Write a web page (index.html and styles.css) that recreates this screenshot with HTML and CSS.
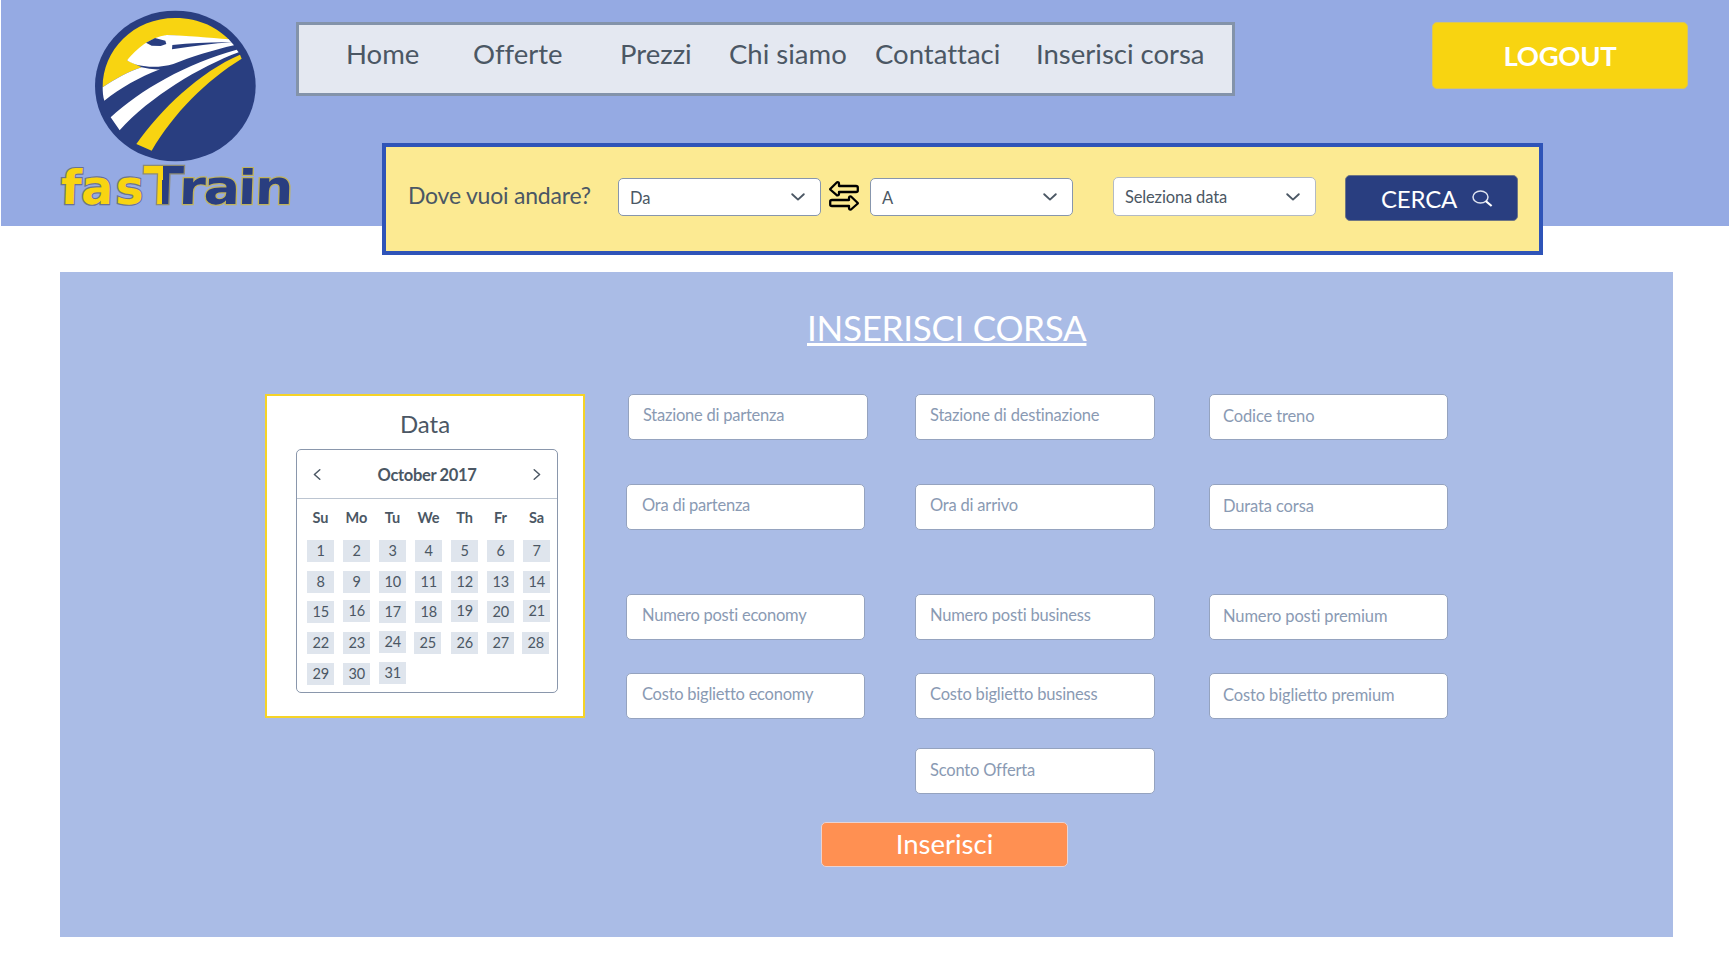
FILE: index.html
```html
<!DOCTYPE html>
<html lang="it">
<head>
<meta charset="utf-8">
<title>fasTrain - Inserisci corsa</title>
<link rel="stylesheet" href="styles.css">
</head>
<body>
<header class="header">
  <svg class="logo" viewBox="174 30 708 594" aria-label="fasTrain">
    <defs>
      <linearGradient id="split" gradientUnits="userSpaceOnUse" x1="0" y1="0" x2="960" y2="0">
        <stop offset="0.447" stop-color="#f8d411"/><stop offset="0.447" stop-color="#293e80"/>
      </linearGradient>
    </defs>
    <ellipse cx="526" cy="258" rx="241" ry="226" fill="#293e80"/>
    <path fill="#f8d411" d="M308 262C308 150 400 54 526 54C600 54 655 85 688 120L500 105L381 181L425 202C385 215 345 238 308 262Z"/>
    <path fill="#fff" d="M381 181C410 145 450 112 500 105C560 107 630 113 686 118L702 136C640 150 570 172 520 192C475 206 410 203 381 181Z"/>
    <path fill="#fff" d="M308 262C345 238 385 215 425 202Q450 209 480 208C420 230 360 265 313 302C309 290 308 275 308 262Z"/>
    <path fill="#293e80" d="M438 128L465 114L496 122L499 132L482 138L455 137Z"/>
    <path fill="#293e80" d="M517 135C580 128 640 126 697 127C640 130 580 138 516 148Z"/>
    <path fill="#fff" d="M332 352C420 270 560 190 710 149L716 157C600 200 450 290 359 391Z"/>
    <path fill="#f8d411" d="M409 432C480 330 600 215 720 164L725 176C620 240 520 340 455 452Z"/>
    <g class="wordmark" transform="translate(21.4 0) skewX(-2)">
      <text class="wordmark-gold" x="181 242 345" y="612">fas</text>
      <text class="wordmark-cap" transform="scale(1.13 1)" x="378" y="612">T</text>
      <text class="wordmark-navy" transform="scale(1.14 1)" x="470 535 625 670" y="612">rain</text>
    </g>
  </svg>
  <nav class="nav">
    <a>Home</a><a>Offerte</a><a>Prezzi</a><a>Chi siamo</a><a>Contattaci</a><a>Inserisci corsa</a>
  </nav>
  <button class="logout">LOGOUT</button>
</header>

<section class="search">
  <span class="question">Dove vuoi andare?</span>
  <div class="select"><span>Da</span><svg class="chevron" viewBox="0 0 14 8"><path d="M1.2 1.2L7 6.6L12.8 1.2"/></svg></div>
  <svg class="swap" viewBox="0 0 30 30">
    <path d="M1.2 8L8 1.3Q10 .8 10 3V5H27Q28.8 5 28.8 6.5V9.5Q28.8 11 27 11H10V12.8Q10 14.8 8 14.3L1.2 8.5Z"/>
    <path d="M28.8 22L22 15.5Q20 15 20 17V19H3Q1.2 19 1.2 20.5V23.5Q1.2 25 3 25H20V27Q20 29 22 28.5L28.8 22.5Z"/>
  </svg>
  <div class="select"><span>A</span><svg class="chevron" viewBox="0 0 14 8"><path d="M1.2 1.2L7 6.6L12.8 1.2"/></svg></div>
  <div class="select select-date"><span>Seleziona data</span><svg class="chevron" viewBox="0 0 14 8"><path d="M1.2 1.2L7 6.6L12.8 1.2"/></svg></div>
  <button class="find"><span>CERCA</span><svg class="lens" viewBox="0 0 21 17"><ellipse cx="8.5" cy="7" rx="7.5" ry="6"/><path class="handle" d="M13.7 11L19.6 16"/></svg></button>
</section>

<main class="panel">
  <h1 class="title">INSERISCI CORSA</h1>
  <div class="columns">
    <section class="date-card">
      <h2 class="date-title">Data</h2>
      <div class="calendar">
        <div class="month">
          <svg class="arrow" viewBox="0 0 8 11"><path d="M6.8 .8L1.4 5.5L6.8 10.2"/></svg>
          <span class="month-name">October 2017</span>
          <svg class="arrow" viewBox="0 0 8 11"><path d="M1.2 .8L6.6 5.5L1.2 10.2"/></svg>
        </div>
        <div class="weekdays"><b>Su</b><b>Mo</b><b>Tu</b><b>We</b><b>Th</b><b>Fr</b><b>Sa</b></div>
        <div class="days">
          <i>1</i><i>2</i><i>3</i><i>4</i><i>5</i><i>6</i><i>7</i>
          <i>8</i><i>9</i><i>10</i><i>11</i><i>12</i><i>13</i><i>14</i>
          <i>15</i><i class="up">16</i><i>17</i><i>18</i><i class="up">19</i><i>20</i><i class="up">21</i>
          <i>22</i><i>23</i><i class="up">24</i><i class="back">25</i><i>26</i><i>27</i><i class="back">28</i>
          <i>29</i><i>30</i><i class="up">31</i>
        </div>
      </div>
    </section>
    <form class="fields">
      <div class="field first">Stazione di partenza</div><div class="field middle">Stazione di destinazione</div><div class="field last">Codice treno</div>
      <div class="field">Ora di partenza</div><div class="field middle">Ora di arrivo</div><div class="field last">Durata corsa</div>
      <div class="field">Numero posti economy</div><div class="field middle">Numero posti business</div><div class="field last">Numero posti premium</div>
      <div class="field">Costo biglietto economy</div><div class="field middle">Costo biglietto business</div><div class="field last">Costo biglietto premium</div>
      <div class="field middle offer">Sconto Offerta</div>
    </form>
  </div>
  <button class="submit">Inserisci</button>
</main>
</body>
</html>
```
FILE: styles.css
```css
* { box-sizing: border-box; }
body { margin: 0; width: 1732px; height: 979px; overflow: hidden; background: #fff; color: #4b5764; font-family: Lato, sans-serif; font-variant-ligatures: none; }
button { font-family: inherit; padding: 0; color: #fff; }
svg { flex: none; overflow: visible; }

.header { display: flex; align-items: flex-start; height: 226px; margin: 0 3px 0 1px; background: #95aae3; }
.logo { width: 236px; height: 198px; margin: 10px 0 0 57px; }
.wordmark { font-family: "DejaVu Sans", sans-serif; font-weight: 700; font-size: 142px; paint-order: stroke; stroke-width: 7px; }
.wordmark-gold { fill: #f8d411; stroke: #6a7390; }
.wordmark-navy { fill: #293e80; stroke: #c0b35c; }
.wordmark-cap { font-size: 157px; fill: url(#split); stroke: #8d8b72; }

.nav { display: grid; grid-template-columns: 127px 147px 109px 146px 161px 1fr; width: 939px; height: 74px; margin: 22px 0 0 2px; padding: 12px 0 0 47px; border: 3px solid #8393aa; background: #e4e8f1; font-size: 27.5px; line-height: 34px; white-space: nowrap; }
.logout { width: 256px; height: 67px; margin: 22px 0 0 197px; padding-bottom: 1px; border: 1px solid #d9c65a; border-radius: 5px; background: #f8d411; font-size: 27.5px; font-weight: 700; letter-spacing: -0.3px; }

.search { display: flex; align-items: flex-start; position: relative; width: 1161px; height: 112px; margin: -83px 0 0 382px; padding-left: 22px; border: 4px solid #2f54b8; background: #fcea92; }
.question { width: 210px; margin-top: 33px; font-size: 23px; line-height: 30px; letter-spacing: -0.22px; white-space: nowrap; }
.select { display: flex; justify-content: space-between; align-items: center; width: 203px; height: 38px; margin-top: 31px; padding: 0 15px 0 11px; border: 1px solid #8796ad; border-radius: 5px; background: #fff; font-size: 16.5px; letter-spacing: -0.15px; }
.select span { padding-top: 1px; }
.select-date { margin: 30px 0 0 40px; height: 39px; border-color: #b3bac4; }
.chevron { width: 14px; height: 8px; }
.chevron path, .arrow path { fill: none; stroke: #4b5764; stroke-width: 1.9; stroke-linecap: round; stroke-linejoin: round; }
.swap { width: 30px; height: 30px; margin: 34px 11px 0 8px; }
.swap path { fill: none; stroke: #000; stroke-width: 2.3; stroke-linejoin: round; }
.find { display: flex; align-items: center; width: 173px; height: 46px; margin: 28px 0 0 29px; padding-left: 35px; border: 1px solid #6f7684; border-radius: 5px; background: #293e80; font-size: 24px; letter-spacing: -0.2px; }
.lens { width: 21px; height: 17px; margin: 1px 0 0 15px; fill: none; stroke: #dfe4f0; stroke-width: 1.5; }
.handle { stroke: #fff; stroke-width: 2.2; }

.panel { width: 1613px; height: 665px; margin: 17px 0 0 60px; background: #aabce6; }
.title { width: 279px; height: 78px; margin: 0 0 0 747px; padding-top: 33px; color: #fff; font-size: 35px; font-weight: 400; line-height: 44px; letter-spacing: -0.28px; white-space: nowrap; text-decoration: underline; text-decoration-thickness: 3px; text-underline-offset: 2px; }
.columns { display: flex; align-items: flex-start; margin: 44px 0 0 205px; }
.date-card { width: 320px; height: 324px; padding: 13px 0 0 29px; border: 2px solid #f5d327; background: #fff; }
.date-title { width: 258px; margin: 0; font-size: 24px; font-weight: 400; line-height: 30px; text-align: center; }
.calendar { width: 262px; height: 244px; margin-top: 10px; border: 1px solid #8a97ac; border-radius: 5px; }
.month { display: flex; justify-content: space-between; align-items: center; height: 49px; padding: 0 16px; border-bottom: 1px solid #bcc5d1; font-size: 16.5px; font-weight: 700; letter-spacing: -0.35px; }
.month-name { padding-top: 2px; }
.arrow { width: 8px; height: 11px; }
.arrow path { stroke-width: 1.5; }
.weekdays { display: grid; grid-template-columns: repeat(7, 36px); margin: 9px 0 0 5.5px; font-size: 14.5px; line-height: 20px; text-align: center; }
.days { display: grid; grid-template-columns: repeat(7, 27px); grid-auto-rows: 22px; gap: 8.7px 9px; margin: 12px 0 0 10px; font-size: 14.5px; line-height: 22px; text-align: center; }
.days i { padding-left: 0.6px; background: #dfe5ed; font-style: normal; }
.up { margin: -1px 0 1px; }
.back { margin: 0 1px 0 -1px; }

.fields { display: grid; grid-template-columns: 289px 294px 239px; grid-template-rows: 90px 110px 79px 75px 46px; margin: 0 0 0 41px; }
.field { width: 239px; height: 46px; padding-left: 15px; border: 1px solid #95a3bf; border-radius: 5px; background: #fff; color: #8a9ab3; font-size: 16.5px; line-height: 41px; letter-spacing: -0.24px; white-space: nowrap; }
.first { width: 240px; margin-left: 2px; padding-left: 14px; }
.middle { width: 240px; padding-left: 14px; letter-spacing: -0.2px; }
.last { padding-left: 13px; line-height: 43px; letter-spacing: -0.13px; }
.offer { grid-column: 2; line-height: 43px; }
.submit { display: block; width: 247px; height: 45px; margin: 28px 0 0 761px; padding-bottom: 2px; border: 1px solid #e9d3d3; border-radius: 5px; background: #ff9052; font-size: 27.5px; line-height: 40px; }
```
